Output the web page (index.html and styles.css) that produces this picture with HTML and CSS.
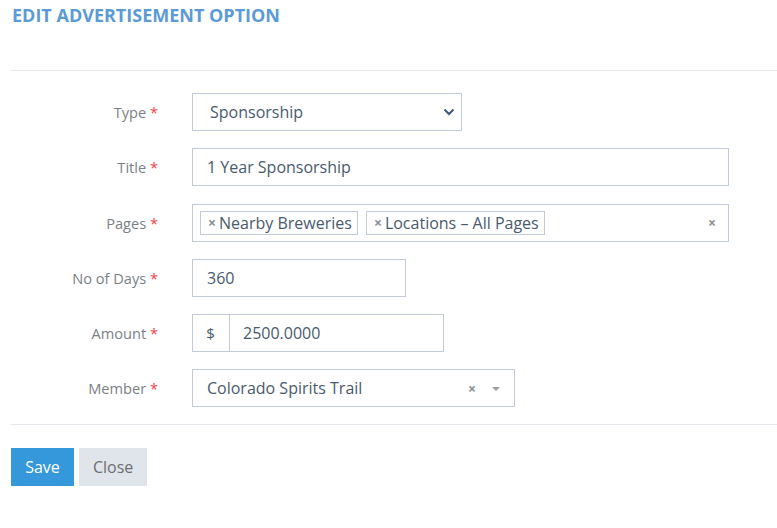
FILE: index.html
```html
<!DOCTYPE html>
<html>
<head>
<meta charset="utf-8">
<link rel="stylesheet" href="styles.css">
</head>
<body>
<div class="page">
  <h1 class="title">EDIT ADVERTISEMENT OPTION</h1>
  <hr class="sep top">
  <form class="form">
    <div class="row">
      <label class="lbl">Type <span class="req">*</span></label>
      <div class="ctl select w-type">
        <span class="val sel-val">Sponsorship</span>
        <svg class="chev" width="12" height="8" viewBox="0 0 12 8"><path d="M1.5 1.5 L6 6 L10.5 1.5" fill="none" stroke="#3f5676" stroke-width="2"/></svg>
      </div>
    </div>
    <div class="row">
      <label class="lbl">Title <span class="req">*</span></label>
      <div class="ctl w-full"><span class="val">1 Year Sponsorship</span></div>
    </div>
    <div class="row">
      <label class="lbl">Pages <span class="req">*</span></label>
      <div class="ctl w-full multi">
        <span class="tag"><span class="tx">×</span>Nearby Breweries</span>
        <span class="tag"><span class="tx">×</span>Locations – All Pages</span>
        <span class="clear">×</span>
      </div>
    </div>
    <div class="row">
      <label class="lbl">No of Days <span class="req">*</span></label>
      <div class="ctl w-days"><span class="val">360</span></div>
    </div>
    <div class="row">
      <label class="lbl">Amount <span class="req">*</span></label>
      <div class="ctl w-amt group">
        <span class="addon">$</span>
        <span class="val">2500.0000</span>
      </div>
    </div>
    <div class="row">
      <label class="lbl">Member <span class="req">*</span></label>
      <div class="ctl w-mem">
        <span class="val grow">Colorado Spirits Trail</span>
        <span class="mclear">×</span>
        <span class="caret"></span>
      </div>
    </div>
  </form>
  <hr class="sep bottom">
  <div class="actions">
    <button class="btn save" type="button">Save</button>
    <button class="btn close" type="button">Close</button>
  </div>
</div>
</body>
</html>
```

FILE: styles.css
```css
* { box-sizing: border-box; }
html, body { margin: 0; padding: 0; background: #fff; }
body { font-family: "Open Sans", "Noto Sans", sans-serif; color: #4a5a6e; }
.page { padding: 0 0 0 11px; }
.title {
  margin: 0;
  padding: 3px 0 0 1px;
  font-size: 18px;
  font-weight: 700;
  color: #5b9bd5;
  line-height: 24px;
  letter-spacing: 0;
}
.sep { border: 0; border-top: 1px solid #e6e9ee; margin: 0; }
.sep.top { margin-top: 43px; }
.form { padding-top: 22.3px; display: flex; flex-direction: column; gap: 17.2px; }
.row { display: grid; grid-template-columns: 147px auto; column-gap: 34px; align-items: center; }
.lbl { text-align: right; font-size: 14.6px; color: #7b7f86; }
.req { color: #f0464c; }
.ctl {
  height: 38px;
  border: 1px solid #c2cbd8;
  display: flex;
  align-items: center;
  padding: 0 14px;
  font-size: 16px;
  color: #4a5a6e;
  background: #fff;
}
.w-type { width: 270px; padding-left: 17px; padding-right: 6px; justify-content: space-between; }
.w-full { width: 537px; }
.w-days { width: 214px; }
.w-amt { width: 252px; padding: 0; }
.w-mem { width: 323px; padding-right: 14px; }
.multi { padding: 0 7px; gap: 8px; }
.tag {
  display: inline-flex;
  align-items: center;
  height: 24px;
  border: 1px solid #c2cbd8;
  padding: 0 5px 0 7px;
  background: #fff;
  font-size: 16px;
  line-height: 22px;
  color: #4a5a6e;
}
.tx { color: #8a8f98; font-size: 14px; margin-right: 3px; font-weight: 700; }
.clear { margin-left: auto; color: #8a8f98; font-size: 14px; font-weight: 700; padding-right: 5px; }
.addon {
  width: 37px;
  height: 100%;
  border-right: 1px solid #c2cbd8;
  display: flex;
  align-items: center;
  justify-content: center;
  font-size: 15px;
  padding-right: 1px;
}
.group .val { padding-left: 13px; }
.grow { flex: 1; }
.mclear { color: #8a8f98; font-size: 14px; font-weight: 700; margin-right: 16px; }
.caret {
  width: 0; height: 0;
  border-left: 4px solid transparent;
  border-right: 4px solid transparent;
  border-top: 4px solid #9aa0a8;
  margin-top: 1px;
}
.sep.bottom { margin-top: 17px; }
.actions { padding-top: 23px; display: flex; gap: 5px; }
.btn {
  height: 38px;
  border: 0;
  font-family: "Open Sans", "Noto Sans", sans-serif;
  font-size: 16px;
  padding: 0 14px;
  border-radius: 0;
}
.save { background: #3498db; color: #fff; width: 63px; }
.close { background: #e0e5ec; color: #6e6e70; width: 68px; }
```
